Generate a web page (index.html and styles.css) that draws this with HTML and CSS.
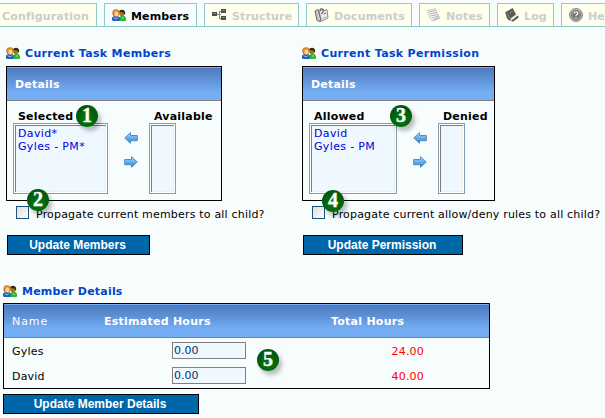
FILE: index.html
```html
<!DOCTYPE html>
<html lang="en">
<head>
<meta charset="utf-8">
<title>Task Members</title>
<link rel="stylesheet" href="styles.css">
</head>
<body>
<svg class="defs" width="0" height="0">
  <defs>
    <linearGradient id="arrow-fill" x1="0" y1="0" x2="0" y2="1"><stop offset="0" stop-color="#a6dcfa"/><stop offset="1" stop-color="#2580dc"/></linearGradient>
    <radialGradient id="help-fill"><stop offset="0" stop-color="#666"/><stop offset=".6" stop-color="#777"/><stop offset="1" stop-color="#aaa"/></radialGradient>
    <symbol id="people" viewBox="0 0 14 12">
      <path d="M7 12V8.500l2-1.500h3.500l1.500 2v2.500l-1 .5z" fill="#36b336"/>
      <path d="M10 9l2 0" stroke="#8be276"/>
      <circle cx="10" cy="4.300" r="2.800" fill="#a8701f"/>
      <path d="M7 3.500Q7 .8 10 .8t3.300 3.700l-1 1-.8-2-3-.5z" fill="#2b2a1c"/>
      <path d="M0 11V8.500L2 7h4l1.800 1.500V11l-1 1H1z" fill="#1c62c4"/>
      <path d="M1.500 8.500L4 10l2-1.500" stroke="#8cc0f4" fill="none"/>
      <circle cx="4" cy="3.900" r="3.700" fill="#cc7c1c"/>
      <ellipse cx="4.400" cy="4.900" rx="2.200" ry="2.500" fill="#ffd28c"/>
      <path d="M1.500 2.500Q4 3 4.500 1.500L6 2.800" stroke="#f0ae50" fill="none"/>
    </symbol>
    <symbol id="arrow-left" viewBox="0 0 14 12">
      <path d="M.7 6L6.500.7v2.800h6.800v5.200H6.500v2.600z" fill="url(#arrow-fill)" stroke="#4583c8" stroke-width=".9"/>
    </symbol>
  </defs>
</svg>
<nav class="tabs">
  <a class="tab tab-first">Configuration</a>
  <a class="tab tab-members active"><svg class="people" width="14" height="12"><use href="#people"/></svg>Members</a>
  <a class="tab tab-structure"><svg width="15" height="12" viewBox="0 0 15 12"><path d="M5 5.500h4M7.500 2v8M7 2.500h3M7 9.500h3" stroke="#888" fill="none"/><path d="M0 3h5v4H0zM9 0h5v4H9zM9 7h5v4H9z" fill="#4c4c4c"/><path d="M1 4.500h3M10 1.500h3M10 8.500h3" stroke="#888"/></svg>Structure</a>
  <a class="tab tab-documents"><svg width="15" height="15" viewBox="0 0 15 15"><path d="M5.500 4l2-2.500h2V3L13 1.500l1 8.500-7.500 3.500z" fill="#ececec" stroke="#888"/><path d="M1 3l3-1.500L7 12l-1 1.500-3-1z" fill="#c9c9c9" stroke="#666"/><path d="M6 3V1h3v4l-2 1M10 6l2-1" fill="none" stroke="#555"/><path d="M7 11l6-2.500" stroke="#bbb"/></svg>Documents</a>
  <a class="tab tab-notes"><svg width="14" height="14" viewBox="0 0 14 14"><path d="M.7 2.500L8.500.7 10 5l3 5-7 3-3-3z" fill="#fafaf6" stroke="#c4c4c4"/><path d="M2 4l6.500-1.500M3 6l6.500-1.500M3.800 8l6.500-1.500M5 10l6.500-2M6 12l6-2.500" stroke="#999" stroke-width=".8"/></svg>Notes</a>
  <a class="tab tab-log"><svg width="14" height="14" viewBox="0 0 14 14"><path d="M.5 4.500L7.500.5 11 7l-6 5.500-2.500-2z" fill="#5a5a5a" stroke="#444" stroke-width=".6"/><path d="M5.500 11.500l6.500-5" stroke="#eee" stroke-width="1.500"/><path d="M6 13l7-5.500.5 2L8 13.500z" fill="#444"/><path d="M2 5l3 5.500M4 5.500l3.500-2" stroke="#888"/></svg>Log</a>
  <a class="tab tab-help"><svg width="14" height="14" viewBox="0 0 14 14"><circle cx="7" cy="7" r="6.500" fill="#c4c4c4" stroke="#888"/><circle cx="7" cy="7" r="4.800" fill="url(#help-fill)" stroke="#666" stroke-width=".8"/><path d="M5.200 5.600q0-1.600 1.800-1.600t1.800 1.600Q8.800 6.500 7 7.300v.9M7 9.200v1.200" fill="none" stroke="#fff" stroke-width="1.200"/></svg>Help</a>
</nav>
<main>
  <div class="columns">
    <section class="col col-members">
      <h2><svg width="14" height="12"><use href="#people"/></svg><span>Current Task Members</span></h2>
      <div class="panel">
        <div class="panel-head">Details</div>
        <div class="panel-body">
          <div class="list"><b>Selected</b><div class="box"><p>David*</p><p>Gyles - PM*</p></div></div>
          <div class="arrows"><svg width="14" height="12"><use href="#arrow-left"/></svg><svg class="flip" width="14" height="12"><use href="#arrow-left"/></svg></div>
          <div class="list narrow"><b>Available</b><div class="box"></div></div>
        </div>
        <span class="badge badge-list">1</span>
      </div>
      <label class="check"><i></i><span>Propagate current members to all child?</span><em class="badge badge-check">2</em></label>
      <button class="btn">Update Members</button>
    </section>
    <section class="col col-permission">
      <h2><svg width="14" height="12"><use href="#people"/></svg><span>Current Task Permission</span></h2>
      <div class="panel">
        <div class="panel-head">Details</div>
        <div class="panel-body">
          <div class="list"><b>Allowed</b><div class="box"><p>David</p><p>Gyles - PM</p></div></div>
          <div class="arrows"><svg width="14" height="12"><use href="#arrow-left"/></svg><svg class="flip" width="14" height="12"><use href="#arrow-left"/></svg></div>
          <div class="list narrow"><b>Denied</b><div class="box"></div></div>
        </div>
        <span class="badge badge-list">3</span>
      </div>
      <label class="check"><i></i><span>Propagate current allow/deny rules to all child?</span><em class="badge badge-check">4</em></label>
      <button class="btn">Update Permission</button>
    </section>
  </div>
  <section class="details">
    <h2><svg width="14" height="12"><use href="#people"/></svg><span>Member Details</span></h2>
    <div class="table">
      <div class="row head"><span class="name">Name</span><span>Estimated Hours</span><span>Total Hours</span></div>
      <div class="row"><span>Gyles</span><input value="0.00"><span class="hours">24.00</span></div>
      <div class="row"><span>David</span><input value="0.00"><span class="hours">40.00</span></div>
      <span class="badge badge-table">5</span>
    </div>
    <button class="btn">Update Member Details</button>
  </section>
</main>
</body>
</html>
```
FILE: styles.css
```css
* { box-sizing: border-box; }
body {
  margin: 0;
  height: 418px;
  overflow: hidden;
  background: #f7fcfd;
  color: #000;
  font: 11px/13px "DejaVu Sans", sans-serif;
}
.defs { position: absolute; }
svg { display: block; flex: none; }
h2, p { margin: 0; }

.tabs {
  display: flex;
  gap: 7px;
  height: 27px;
  padding-top: 3px;
  border-bottom: 1px solid #91c8ca;
  overflow: hidden;
}
.tab {
  display: flex;
  flex: none;
  align-items: center;
  gap: 5px;
  height: 23px;
  padding: 2px 0 0 7px;
  border: 1px solid #91c8ca;
  border-bottom: 0;
  background: #ffffed;
  color: #ccc;
  font-weight: bold;
  letter-spacing: .15px;
  white-space: nowrap;
}
.tab svg { margin-top: -2px; }
.tab-first { width: 97px; padding-left: 2px; border-left: 0; }
.tab-members { width: 93px; }
.tab-structure { width: 95px; }
.tab-documents { width: 106px; }
.tab-notes { width: 71px; }
.tab-log { width: 57px; }
.tab-help { width: 95px; }
.tab.active { height: 24px; padding-top: 1px; background: #f7fcfd; color: #000; }

.columns { display: flex; height: 228px; padding: 19px 0 0 6px; }
.col-members { flex: none; width: 296px; }
.col-permission { flex: none; width: 303px; }
h2 {
  display: flex;
  align-items: center;
  gap: 5px;
  height: 14px;
  color: #0044cc;
  font-size: 11px;
  letter-spacing: .33px;
}
h2 span { padding-top: 1px; }
.details h2 { letter-spacing: .2px; }
.panel {
  position: relative;
  width: 216px;
  height: 135px;
  margin-top: 6px;
  border: 1px solid #000;
}
.col-permission .panel { width: 193px; }
.panel-head, .head {
  height: 34px;
  border-top: 1px solid #75aef4;
  border-bottom: 1px solid #808080;
  background: linear-gradient(#4f7abd, #5e90d6 35%, #75aef4 75%, #75aef4);
  color: #fff;
  font-weight: bold;
}
.panel-head { padding: 10px 0 0 8px; letter-spacing: .2px; }
.panel-body { display: flex; padding: 9px 0 0 6px; }
.list { width: 95px; }
.col-permission .list { width: 88px; }
.list b { display: block; height: 13px; padding-left: 5px; letter-spacing: .2px; white-space: nowrap; }
.panel .narrow { width: 27px; }
.box {
  height: 71px;
  padding: 3px 0 0 2px;
  border: 1px solid #7f9db9;
  background: #eff7ff;
  box-shadow: inset 0 0 0 1px #fff, inset 2px 2px 0 #807d75, inset -2px -2px 0 #f1efe2;
  color: #0000dd;
  letter-spacing: .35px;
}
.box p { padding-left: 2px; }
.arrows { display: flex; flex-direction: column; gap: 12px; width: 41px; padding: 22px 0 0 16px; }
.flip { transform: scaleX(-1); }

.check { position: relative; display: flex; align-items: center; gap: 7px; height: 13px; margin: 5px 0 0 10px; white-space: nowrap; }
.check i { width: 13px; height: 13px; border: 1px solid #1c5180; background: linear-gradient(135deg, #dcdcd7, #fff); }
.check span { padding-top: 3px; letter-spacing: .19px; }
.btn {
  display: block;
  width: 143px;
  height: 20px;
  margin: 16px 0 0 1px;
  padding: 0 2px 0 0;
  border: 1px solid #000;
  background: #0066aa;
  color: #fff;
  font: bold 12px/18px "Liberation Sans", sans-serif;
}
.col-permission .btn { width: 160px; }

.check .badge, .badge {
  position: absolute;
  width: 22px;
  height: 22px;
  border-radius: 50%;
  background: radial-gradient(circle at 50% 65%, #087a0c, #005c0d 60%, #064c12);
  box-shadow: 3px 4px 4px rgba(0, 0, 0, .25);
  color: #fff;
  font: bold 20px/21px "Liberation Serif", serif;
  -webkit-text-stroke: .4px #fff;
  text-align: center;
}
.badge-list { left: 69px; top: 38px; }
.col-permission .badge-list { left: 87px; }
.badge-check { left: 11px; top: -17px; }
.col-permission .badge-check { left: 10px; top: -16px; }

.details { padding: 29px 0 0 3px; }
.table { position: relative; width: 487px; height: 86px; margin-top: 5px; border: 1px solid #000; }
.row { display: grid; grid-template-columns: 168px 74px 1fr; align-items: center; height: 25px; letter-spacing: .2px; }
.row > span { padding-top: 1px; }
.row > span:first-child { padding-left: 8px; }
.row input {
  width: 74px;
  height: 17px;
  padding: 0 0 0 1px;
  border: 1px solid #808080;
  background: #eff7ff;
  color: #003366;
  font: 11px/15px "DejaVu Sans", sans-serif;
}
.hours { width: 178px; color: #f00; text-align: right; }
.row.head { grid-template-columns: 100px 227px 1fr; height: 34px; letter-spacing: .25px; }
.head .name { font-weight: normal; letter-spacing: .9px; }
.badge-table { left: 253px; top: 45px; }
.details .btn { width: 196px; margin: 5px 0 0; }
```
